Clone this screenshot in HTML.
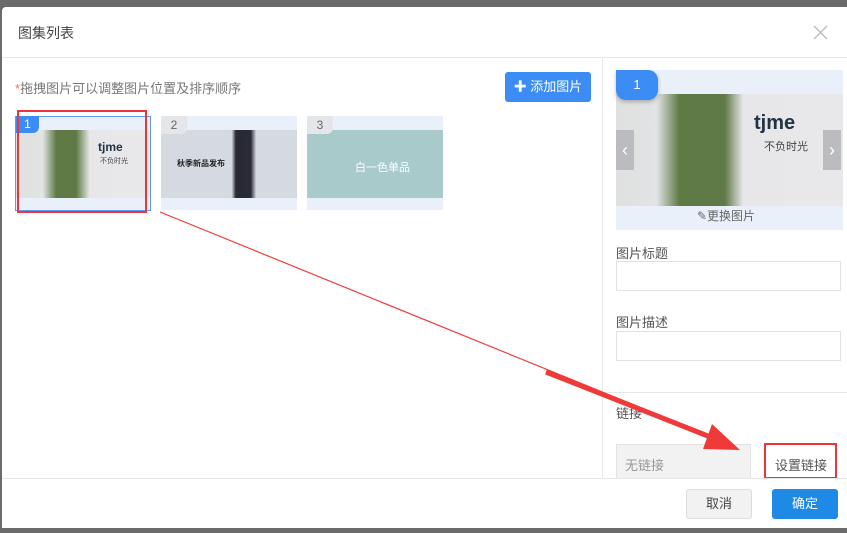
<!DOCTYPE html>
<html><head><meta charset="utf-8"><style>
*{margin:0;padding:0;box-sizing:border-box}
body{width:847px;height:533px;background:#6b6b6b;position:relative;overflow:hidden;font-family:"Liberation Sans","Noto Sans CJK SC",sans-serif;color:#555}
.dlg{position:absolute;left:2px;top:7px;width:845px;height:521px;background:#fff;border-radius:4px 0 0 0}
.a{position:absolute;white-space:nowrap}
.tag{position:absolute;background:#3b8cf5;color:#fff;font-size:12px;text-align:center;border-radius:0 0 6px 0}
.tg{background:#e4e6ea;color:#666}
</style></head><body>
<div class="dlg"></div>
 <div class="a" style="left:18px;top:23px;font-size:14px;color:#444">图集列表</div>
 <svg class="a" style="left:813px;top:25px" width="15" height="15"><path d="M1 1L14 14M14 1L1 14" stroke="#b9bdc4" stroke-width="1.5"/></svg>
 <div class="a" style="left:2px;top:57px;width:845px;height:1px;background:#e8e8e8"></div>
 <div class="a" style="left:602px;top:58px;width:1px;height:420px;background:#e8e8e8"></div>
 <div class="a" style="left:15px;top:78px;font-size:13px;color:#777"><span style="color:#f56c6c">*</span>拖拽图片可以调整图片位置及排序顺序</div>
 <div class="a" style="left:505px;top:72px;width:86px;height:30px;background:#3b8cf5;color:#fff;border-radius:3px;font-size:13px;line-height:30px;text-align:center">✚ 添加图片</div>

 <div class="a" style="left:15px;top:116px;width:136px;height:95px;background:#e9f0fa;border:1px solid #5b9cf2"></div>
 <div class="a" style="left:16px;top:130px;width:134px;height:68px;background:linear-gradient(90deg,#dfe1e0 0,#e2e4e3 20%,#5f7a45 30%,#607a47 45%,#e7e7ea 55%,#e8e8eb)"></div>
 <div class="a" style="left:98px;top:140px;font-size:12px;color:#234;font-weight:bold">tjme</div>
 <div class="a" style="left:100px;top:156px;font-size:7px;color:#444">不负时光</div>
 <div class="tag" style="left:16px;top:116px;width:23px;height:17px;line-height:17px">1</div>
 <div class="a" style="left:17px;top:110px;width:130px;height:103px;border:2px solid #f0333a"></div>

 <div class="a" style="left:161px;top:116px;width:136px;height:94px;background:#e9f0fa"></div>
 <div class="a" style="left:161px;top:130px;width:136px;height:68px;background:linear-gradient(90deg,#d4dae0 0,#d4dae0 52%,#2a2a35 55%,#2b2b36 66%,#d4dae0 70%)"></div>
 <div class="a" style="left:177px;top:158px;font-size:8px;color:#222;font-weight:bold">秋季新品发布</div>
 <div class="tag tg" style="left:161px;top:116px;width:26px;height:18px;line-height:18px">2</div>

 <div class="a" style="left:307px;top:116px;width:136px;height:94px;background:#e9f0fa"></div>
 <div class="a" style="left:307px;top:130px;width:136px;height:68px;background:#a9cacb"></div>
 <div class="a" style="left:355px;top:159px;font-size:11px;color:#fff">白一色单品</div>
 <div class="tag tg" style="left:307px;top:116px;width:26px;height:18px;line-height:18px">3</div>

 <div class="a" style="left:616px;top:70px;width:227px;height:160px;background:#e9f0fa"></div>
 <div class="a" style="left:616px;top:94px;width:227px;height:112px;background:linear-gradient(90deg,#dfe0e0 0,#e2e3e4 18%,#5e7a45 28%,#607a47 48%,#e7e7ea 56%,#e8e8eb)"></div>
 <div class="a" style="left:754px;top:112px;font-size:20px;color:#234;font-weight:bold">tjme</div>
 <div class="a" style="left:764px;top:138px;font-size:11px;color:#444">不负时光</div>
 <div class="a" style="left:616px;top:70px;width:42px;height:30px;background:#3b8cf5;color:#fff;border-radius:0 10px 10px 10px;font-size:13px;line-height:30px;text-align:center;box-shadow:0 2px 4px rgba(0,0,0,.25)">1</div>
 <div class="a" style="left:616px;top:130px;width:18px;height:40px;background:#bbbcc0;color:#fff;font-size:18px;line-height:40px;text-align:center">‹</div>
 <div class="a" style="left:823px;top:130px;width:18px;height:40px;background:#bbbcc0;color:#fff;font-size:18px;line-height:40px;text-align:center">›</div>
 <div class="a" style="left:697px;top:207px;font-size:12px;color:#666">✎更换图片</div>

 <div class="a" style="left:616px;top:243px;font-size:13px;color:#555">图片标题</div>
 <div class="a" style="left:616px;top:261px;width:225px;height:30px;border:1px solid #e2e2e2"></div>
 <div class="a" style="left:616px;top:312px;font-size:13px;color:#555">图片描述</div>
 <div class="a" style="left:616px;top:331px;width:225px;height:30px;border:1px solid #e2e2e2"></div>
 <div class="a" style="left:603px;top:392px;width:244px;height:1px;background:#e8e8e8"></div>
 <div class="a" style="left:616px;top:403px;font-size:13px;color:#555">链接</div>
 <div class="a" style="left:616px;top:444px;width:135px;height:36px;background:#f2f2f2;border:1px solid #e2e2e2;font-size:13px;color:#999;padding:10px 8px">无链接</div>
 <div class="a" style="left:764px;top:443px;width:73px;height:36px;border:2px solid #f0333a;font-size:13px;color:#555;padding:10px 9px">设置链接</div>

 <svg class="a" style="left:0;top:0" width="847" height="533"><line x1="160" y1="212" x2="735" y2="446" stroke="#f03a3a" stroke-width="1.2"/><line x1="546" y1="372" x2="718" y2="440" stroke="#f03a3a" stroke-width="5"/><polygon points="740,450 712,424 703,449" fill="#f03a3a"/></svg>

 <div class="a" style="left:2px;top:478px;width:845px;height:1px;background:#e8e8e8"></div>
 <div class="a" style="left:2px;top:479px;width:845px;height:49px;background:#fff"></div>
 <div class="a" style="left:686px;top:489px;width:66px;height:30px;background:#f2f2f2;border:1px solid #dcdcdc;border-radius:3px;font-size:13px;color:#444;text-align:center;line-height:28px">取消</div>
 <div class="a" style="left:772px;top:489px;width:66px;height:30px;background:#1f8ae6;border-radius:3px;font-size:13px;color:#fff;text-align:center;line-height:30px">确定</div>
</body></html>
